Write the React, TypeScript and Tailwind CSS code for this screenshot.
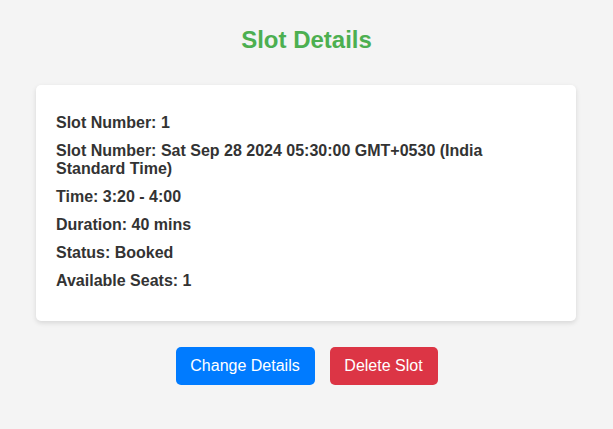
export default function App() {
  const rows = [
    'Slot Number: 1',
    'Slot Number: Sat Sep 28 2024 05:30:00 GMT+0530 (India Standard Time)',
    'Time: 3:20 - 4:00',
    'Duration: 40 mins',
    'Status: Booked',
    'Available Seats: 1',
  ]

  return (
    <div className="min-h-[429px] bg-[#f4f4f4] pt-[26px] font-['Liberation_Sans',Arial,sans-serif]">
      <h2 className="text-center text-[24px] leading-[28px] font-bold text-[#4caf50]">Slot Details</h2>
      <div className="ml-[36px] mt-[31px] w-[540px] rounded-[5px] bg-white px-[20px] pt-[29px] pb-[31px] shadow-[0_2px_5px_rgba(0,0,0,0.12)]">
        <div className="flex flex-col gap-[10px]">
          {rows.map((r) => (
            <p key={r} className="text-[16px] leading-[18px] font-bold text-[#333]">{r}</p>
          ))}
        </div>
      </div>
      <div className="mt-[26px] flex justify-center gap-[15px]">
        <button className="h-[38px] w-[139px] rounded-[5px] bg-[#007bff] text-[16px] text-white">Change Details</button>
        <button className="h-[38px] w-[108px] rounded-[5px] bg-[#dc3545] text-[16px] text-white">Delete Slot</button>
      </div>
    </div>
  )
}
